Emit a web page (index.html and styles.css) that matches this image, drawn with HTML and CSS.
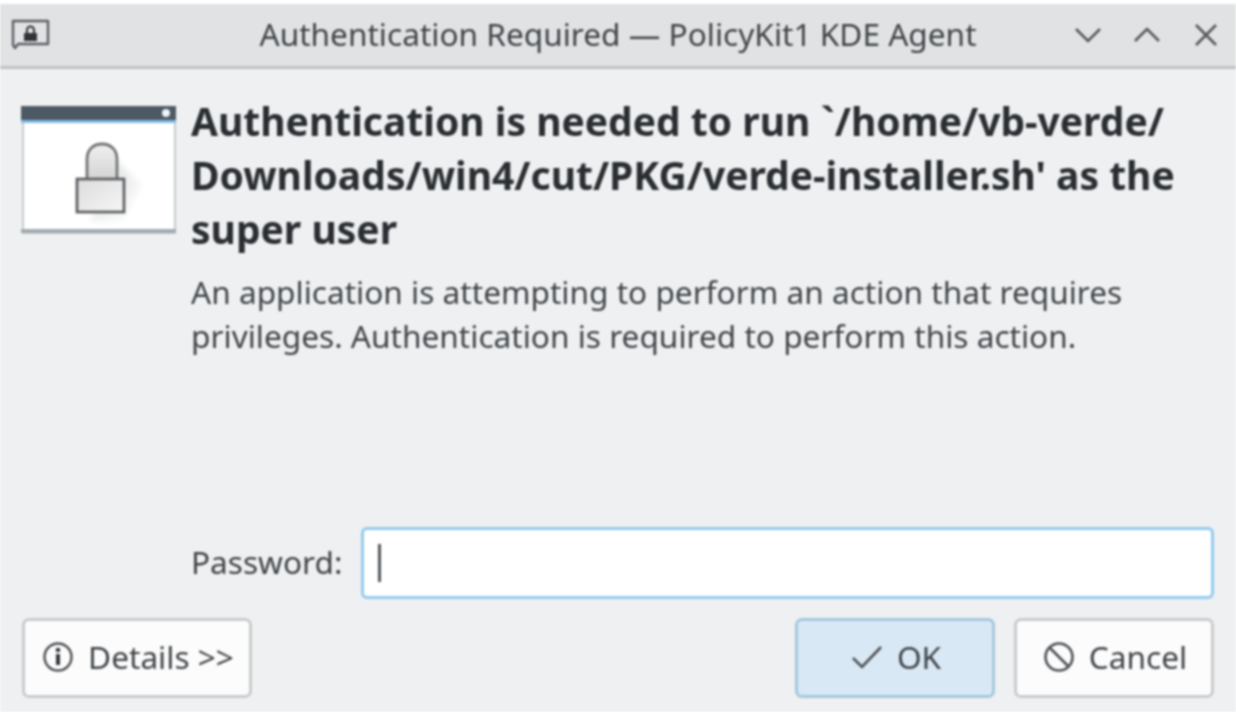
FILE: index.html
```html
<!DOCTYPE html>
<html>
<head>
    <title>Authentication Required — PolicyKit1 KDE Agent</title>
    <meta name="viewport" content="width=device-width, initial-scale=1.0">
    <link rel="stylesheet" href="styles.css">
</head>
<body>
    <div class="window">
        <header class="titlebar">
            <svg class="app-icon" viewBox="0 0 40 36" fill="none">
                <path d="M2 24V3h35v23H7l-3 4-2-3z" stroke="#5b6064" stroke-width="2.4" stroke-linejoin="round"/>
                <rect x="13" y="15" width="13" height="8" fill="#2f3336"/>
                <path d="M16 15v-3a3.500 3.500 0 0 1 7 0v3" stroke="#2f3336" stroke-width="2"/>
            </svg>
            <div class="title">Authentication Required — PolicyKit1 KDE Agent</div>
            <div class="window-buttons">
                <svg viewBox="0 0 30 20" fill="none"><path d="M3 4l12 12L27 4" stroke="#54585c" stroke-width="2.600"/></svg>
                <svg viewBox="0 0 30 20" fill="none"><path d="M3 16L15 4l12 12" stroke="#54585c" stroke-width="2.600"/></svg>
                <svg viewBox="0 0 30 24" fill="none"><path d="M5 2l20 20M25 2L5 22" stroke="#54585c" stroke-width="2.600"/></svg>
            </div>
        </header>

        <main class="content">
            <div class="message">
                <svg class="lock-icon" viewBox="0 0 156 130" fill="none">
                    <defs>
                        <linearGradient id="shackleFill" x1="0" y1="0" x2="0" y2="1">
                            <stop offset="0" stop-color="#f0f0f0"/>
                            <stop offset="1" stop-color="#d2d2d2"/>
                        </linearGradient>
                        <linearGradient id="bodyFill" x1="0" y1="0" x2="1" y2="1">
                            <stop offset="0" stop-color="#dcdcdc"/>
                            <stop offset="1" stop-color="#f6f6f6"/>
                        </linearGradient>
                        <linearGradient id="lockShadow" x1="0" y1="0" x2="1" y2="1">
                            <stop offset="0" stop-color="#dadcdd"/>
                            <stop offset="1" stop-color="#ffffff"/>
                        </linearGradient>
                        <filter id="softShadow" x="-20%" y="-20%" width="140%" height="140%">
                            <feGaussianBlur stdDeviation="3"/>
                        </filter>
                    </defs>
                    <rect x="3" y="12" width="152" height="116" fill="#ffffff" stroke="#c4cbd0" stroke-width="2"/>
                    <rect x="1" y="1" width="156" height="15" fill="#4d5964"/>
                    <rect x="1" y="15" width="156" height="3" fill="#7fbce6"/>
                    <circle cx="146" cy="8" r="4" fill="#f2f4f6"/>
                    <rect x="1" y="124" width="156" height="4" fill="#a4abb0"/>
                    <path d="M97 56l24 24-18 36H70z" fill="url(#lockShadow)" filter="url(#softShadow)"/>
                    <path d="M67 76V54c0-10 7-15 15-15s15 5 15 15v22" fill="url(#shackleFill)" stroke="#727578" stroke-width="2.800"/>
                    <rect x="57" y="74" width="47" height="33" fill="url(#bodyFill)" stroke="#5f6265" stroke-width="2.800"/>
                </svg>
                <div class="message-text">
                    <h1>Authentication is needed to run `/home/vb-verde/ Downloads/win4/cut/PKG/verde-installer.sh' as the super user</h1>
                    <p>An application is attempting to perform an action that requires privileges. Authentication is required to perform this action.</p>
                </div>
            </div>

            <div class="password-row">
                <label>Password:</label>
                <div class="password-input"><span class="caret"></span></div>
            </div>

            <div class="buttons">
                <button class="btn btn-details">
                    <svg viewBox="0 0 32 32" fill="none">
                        <circle cx="16" cy="16" r="13.500" stroke="#4d5155" stroke-width="2.400"/>
                        <path d="M16 13v11" stroke="#33363a" stroke-width="4"/>
                        <circle cx="16" cy="9" r="2.300" fill="#33363a"/>
                    </svg>
                    Details &gt;&gt;
                </button>
                <div class="button-spacer"></div>
                <button class="btn btn-ok">
                    <svg viewBox="0 0 32 26" fill="none"><path d="M2 14l9 9L30 3" stroke="#4d5155" stroke-width="2.600"/></svg>
                    OK
                </button>
                <button class="btn btn-cancel">
                    <svg viewBox="0 0 32 32" fill="none">
                        <circle cx="16" cy="16" r="13.500" stroke="#4d5155" stroke-width="2.600"/>
                        <path d="M6 6l20 20" stroke="#4d5155" stroke-width="2.600"/>
                    </svg>
                    Cancel
                </button>
            </div>
        </main>
    </div>
</body>
</html>
```

FILE: styles.css
```css
:root {
    --bg-color: #eff0f1;
    --title-color: #e1e2e3;
    --text-color: #31363b;
    --muted-color: #3f4448;
    --focus-color: #93cbef;
}
html, body {
    height: 100%;
}
body {
    font-family: 'Noto Sans', sans-serif;
    background-color: #ffffff;
    color: var(--text-color);
    margin: 0;
    padding: 4px 0 0;
    box-sizing: border-box;
    overflow: hidden;
}
/* the screenshot is an upscaled capture, so everything is a little soft */
.window {
    height: 708px;
    display: flex;
    flex-direction: column;
    background-color: var(--bg-color);
    filter: blur(0.8px);
}
.titlebar {
    height: 62px;
    flex: none;
    display: flex;
    align-items: center;
    background-color: var(--title-color);
    border-bottom: 3px solid #bfc1c3;
    padding: 0 15px 0 11px;
}
.app-icon {
    width: 40px;
    height: 36px;
    flex: none;
    margin-top: 2px;
}
.title {
    flex: 1;
    text-align: center;
    font-size: 31.6px;
    line-height: 40px;
    color: var(--muted-color);
    white-space: nowrap;
    margin: -3px 0 0 112px;
}
.window-buttons {
    display: flex;
    align-items: center;
    gap: 29px;
}
.window-buttons svg {
    width: 30px;
    height: 20px;
}
.window-buttons svg:last-child {
    width: 30px;
    height: 24px;
}
.content {
    flex: 1;
    display: flex;
    flex-direction: column;
    padding: 25px 22px 14px 20px;
}
.message {
    flex: 1;
    display: flex;
    gap: 15px;
}
.lock-icon {
    width: 156px;
    height: 130px;
    flex: none;
    margin-top: 11px;
}
.message-text h1 {
    margin: 0;
    font-size: 39px;
    line-height: 54px;
    font-weight: 700;
    color: #2a2e32;
}
.message-text p {
    margin: 14px 0 0;
    font-size: 31.6px;
    line-height: 43.5px;
    color: var(--muted-color);
    width: 1000px;
}
.password-row {
    display: flex;
    align-items: center;
    gap: 19px;
    padding-left: 171px;
}
.password-row label {
    font-size: 31.6px;
    line-height: 44px;
    margin-top: -2px;
    color: var(--muted-color);
}
.password-input {
    flex: 1;
    height: 66px;
    display: flex;
    align-items: center;
    background-color: #ffffff;
    border: 3px solid var(--focus-color);
    border-radius: 6px;
    padding-left: 14px;
}
.caret {
    width: 3px;
    height: 38px;
    background-color: #54585c;
}
.buttons {
    display: flex;
    gap: 19px;
    margin-top: 19px;
    padding-left: 2px;
}
.button-spacer {
    flex: 1;
}
.btn {
    height: 80px;
    display: flex;
    align-items: center;
    justify-content: center;
    gap: 14px;
    font-family: inherit;
    font-size: 31.6px;
    color: var(--muted-color);
    background-color: #fcfcfc;
    border: 3px solid #c9cbcc;
    border-radius: 7px;
    padding: 0 0 3px 2px;
}
.btn svg {
    width: 32px;
    height: 32px;
    flex: none;
}
.btn-details {
    width: 230px;
}
.btn-ok {
    width: 200px;
    background-color: #d9e8f5;
    border-color: #a5c8df;
}
.btn-ok svg {
    height: 26px;
}
.btn-cancel {
    width: 200px;
}
```
